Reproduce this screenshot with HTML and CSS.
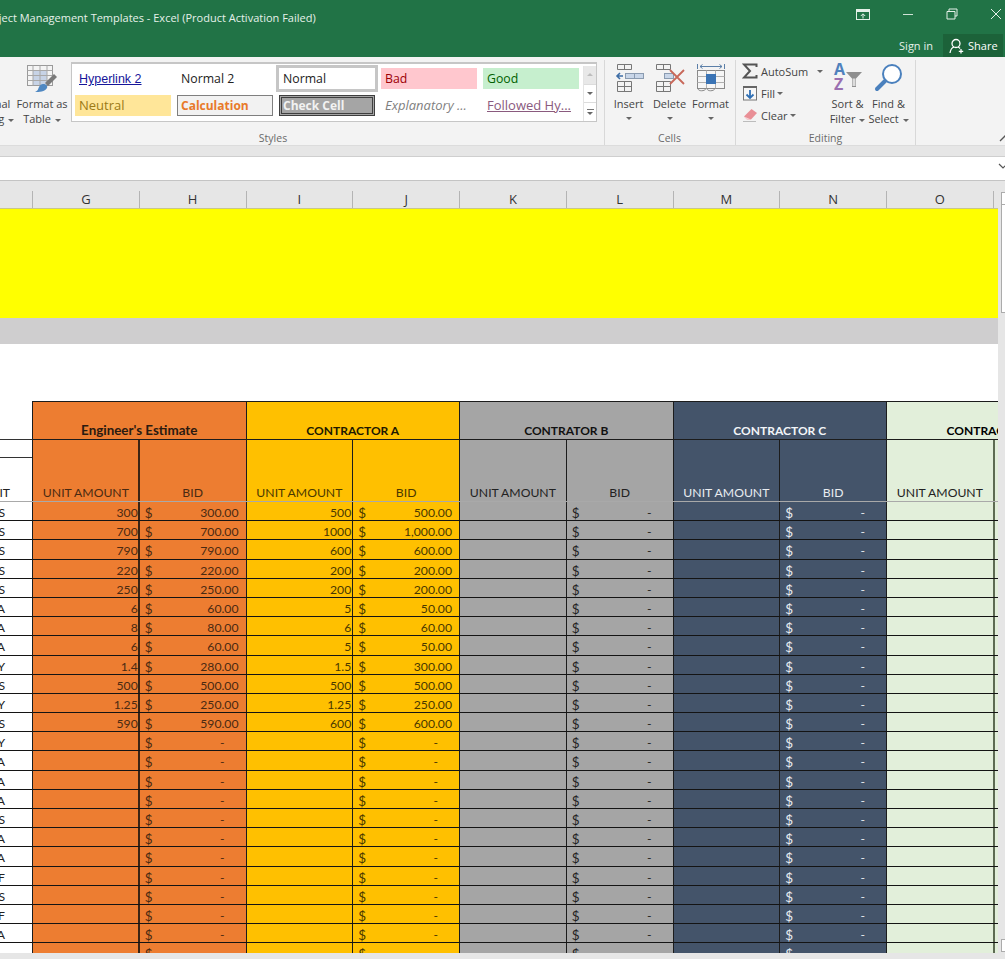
FILE: index.html
```html
<!DOCTYPE html>
<html lang="en">
<head>
<meta charset="utf-8">
<title>Project Management Templates - Excel</title>
<link rel="stylesheet" href="styles.css">
</head>
<body>
<div class="titlebar">
    <div class="title-row">
        <div class="title">Project Management Templates - Excel (Product Activation Failed)</div>
        <div class="win-btn"><svg width="14" height="11" viewBox="0 0 14 11"><rect x="0.5" y="0.5" width="13" height="10" fill="none" stroke="#e4f0e8"/><rect x="1" y="1" width="12" height="2" fill="#e4f0e8"/><path d="M7 9.500V5M4.800 7L7 4.800 9.200 7" fill="none" stroke="#e4f0e8"/></svg></div>
        <div class="win-btn"><svg width="12" height="12" viewBox="0 0 12 12"><path d="M1 6.500h10" stroke="#cfe3d6" stroke-width="1"/></svg></div>
        <div class="win-btn"><svg width="12" height="12" viewBox="0 0 12 12"><path d="M3 3V1h8v7H9M1 3.500h8v7.500H1z" fill="none" stroke="#e4f0e8"/></svg></div>
        <div class="win-btn"><svg width="12" height="12" viewBox="0 0 12 12"><path d="M1 1l10 10M11 1L1 11" stroke="#e4f0e8"/></svg></div>
    </div>
    <div class="account-row">
        <span class="sign-in">Sign in</span>
        <span class="share"><svg width="16" height="16" viewBox="0 0 16 16"><circle cx="7" cy="5.500" r="4" fill="none" stroke="#fff" stroke-width="1.300"/><path d="M1 15c.5-3.500 2.500-5.500 4-6M9 9c.8.300 1.500.8 2 1.500M12 11v4.500M9.800 13.300h4.400" fill="none" stroke="#fff" stroke-width="1.300"/></svg>Share</span>
    </div>
</div>

<div class="ribbon">
    <div class="group group-styles">
        <div class="group-body">
            <div class="big cond"><div class="big-icon"></div><div>Conditional</div><div>Formatting <span class="caret"></span></div></div>
            <div class="big fmt-table">
                <div class="big-icon"><svg width="32" height="30" viewBox="0 0 32 30"><rect x="1.500" y="2.500" width="25" height="20" fill="#f4f4f4" stroke="#9a9a9a"/><rect x="7" y="8" width="14" height="14" fill="#c7d3e6"/><path d="M1.500 7.500h25M1.500 12.500h25M1.500 17.500h25M7 2.500v20M14 2.500v20M21 2.500v20" stroke="#a8a8a8" fill="none"/><path d="M28 11l3 3-9 9-3-3z" fill="#7a7a7a"/><path d="M17 21c3 0 5 2 4 4-2 4-8 4-12 4 3-1 3-3 4-5 .800-1.800 2.500-3 4-3z" fill="#4f88c2"/></svg></div>
                <div>Format as</div><div>Table <span class="caret"></span></div>
            </div>
            <div class="gallery">
                <div class="swatches">
                    <div class="sw s-link">Hyperlink 2</div>
                    <div class="sw">Normal 2</div>
                    <div class="sw s-normal">Normal</div>
                    <div class="sw s-bad">Bad</div>
                    <div class="sw s-good">Good</div>
                    <div class="sw s-neutral">Neutral</div>
                    <div class="sw s-calc">Calculation</div>
                    <div class="sw s-check">Check Cell</div>
                    <div class="sw s-expl">Explanatory ...</div>
                    <div class="sw s-followed">Followed Hy...</div>
                </div>
                <div class="scroller">
                    <div class="scr scr-up"><span class="caret up"></span></div>
                    <div class="scr"><span class="caret"></span></div>
                    <div class="scr scr-more"><span class="more-line"></span><span class="caret"></span></div>
                </div>
            </div>
        </div>
        <div class="group-label">Styles</div>
    </div>

    <div class="group group-cells">
        <div class="group-body">
            <div class="big cell-btn">
                <div class="big-icon"><svg width="32" height="30" viewBox="0 0 32 30"><path d="M4.500 1.500h14v5h-14zM11.500 1.500v5M4.500 18.500h14v10h-14zM4.500 23.500h14M11.500 18.500v10" fill="none" stroke="#777"/><rect x="12.500" y="10.500" width="18" height="5" fill="#c9d6e8" stroke="#8a9bb0"/><path d="M21.500 10.500v5" stroke="#8a9bb0"/><path d="M10 13H4.500M7 10l-3 3 3 3" fill="none" stroke="#3e6ea6" stroke-width="1.600"/></svg></div>
                <div>Insert</div><div class="caret-line"><span class="caret"></span></div>
            </div>
            <div class="big cell-btn">
                <div class="big-icon"><svg width="32" height="30" viewBox="0 0 32 30"><path d="M2.500 1.500h14v5h-14zM9.500 1.500v5M2.500 18.500h14v10h-14zM2.500 23.500h14M9.500 18.500v10" fill="none" stroke="#777"/><rect x="10.500" y="10.500" width="9" height="5" fill="#c9d6e8" stroke="#8a9bb0"/><path d="M16 7l14 14M30 7L16 21" stroke="#c8685a" stroke-width="1.800"/></svg></div>
                <div>Delete</div><div class="caret-line"><span class="caret"></span></div>
            </div>
            <div class="big cell-btn">
                <div class="big-icon"><svg width="32" height="30" viewBox="0 0 32 30"><path d="M2.500 1v5M29.500 1v5M5 3.500h22M5 3.500l2.500-2M5 3.500l2.500 2M27 3.500l-2.500-2M27 3.500l-2.500 2" fill="none" stroke="#5b7fa8"/><rect x="2.500" y="7.500" width="27" height="18" fill="#f6f6f6" stroke="#8a8a8a"/><path d="M2.500 13.500h27M2.500 19.500h27M11.500 7.500v18M20.500 7.500v18" stroke="#b0b0b0"/><rect x="11" y="11" width="10" height="10" fill="#3b74b5"/><path d="M3 25.500c0 3 7 3 8 0M12 25.500c0 3 7 3 8 0" fill="none" stroke="#8a8a8a"/></svg></div>
                <div>Format</div><div class="caret-line"><span class="caret"></span></div>
            </div>
        </div>
        <div class="group-label">Cells</div>
    </div>

    <div class="group group-editing">
        <div class="group-body">
            <div class="small-col">
                <div class="small"><svg width="16" height="16" viewBox="0 0 16 16"><path d="M14.500 4V1.500H2l6 6.500-6 6.500h12.500V12" fill="none" stroke="#555" stroke-width="2"/></svg><span>AutoSum</span><span class="caret far"></span></div>
                <div class="small"><svg width="16" height="16" viewBox="0 0 16 16"><rect x="1.500" y="1.500" width="13" height="13.500" fill="#f7f7f7" stroke="#777"/><rect x="1" y="1" width="14" height="2" fill="#666"/><path d="M8 5v8M4.500 9.500L8 13l3.500-3.500" fill="none" stroke="#2f6fb4" stroke-width="1.800"/></svg><span>Fill</span><span class="caret"></span></div>
                <div class="small"><svg width="16" height="16" viewBox="0 0 16 16"><path d="M9.500 2L15 6l-6 6.500H5L2 9.500z" fill="#e98f96"/><path d="M2 9.500l3 3h4" fill="#f6d4d6"/><path d="M1 14.500h13" stroke="#bcbcbc"/></svg><span>Clear</span><span class="caret"></span></div>
            </div>
            <div class="big edit-btn">
                <div class="big-icon"><svg width="32" height="30" viewBox="0 0 32 30"><text x="2" y="12" class="az az-a">A</text><text x="2" y="27" class="az az-z">Z</text><path d="M14 9h16l-6 6.500V24h-4v-8.500z" fill="#8f8f8f"/><path d="M20.500 15.500h3V23h-3z" fill="#dcdcdc"/></svg></div>
                <div>Sort &amp;</div><div>Filter <span class="caret"></span></div>
            </div>
            <div class="big edit-btn">
                <div class="big-icon"><svg width="30" height="30" viewBox="0 0 30 30"><circle cx="18" cy="11" r="9" fill="#fff" stroke="#4a80bd" stroke-width="2"/><path d="M11 18L3 26" stroke="#4a80bd" stroke-width="4" stroke-linecap="round"/></svg></div>
                <div>Find &amp;</div><div>Select <span class="caret"></span></div>
            </div>
        </div>
        <div class="group-label">Editing</div>
    </div>

    <div class="collapse"><svg width="12" height="8" viewBox="0 0 12 8"><path d="M1 7l5-5 5 5" fill="none" stroke="#555" stroke-width="1.300"/></svg></div>
</div>

<div class="band"></div>
<div class="formula"><svg width="10" height="7" viewBox="0 0 10 7"><path d="M1 1l4 4 4-4" fill="none" stroke="#555" stroke-width="1.200"/></svg></div>

<div class="main">
    <div class="sheet">
        <div class="cols">
            <span></span><span>G</span><span>H</span><span>I</span><span>J</span><span>K</span><span>L</span><span>M</span><span>N</span><span>O</span><span></span>
        </div>
        <div class="grid-area">
            <div class="banner"></div>
            <div class="strip"></div>
            <div class="gap"></div>

            <div class="head-top">
                <span class="blank"></span>
                <span class="h2 orange est">Engineer's Estimate</span>
                <span class="h2 gold">CONTRACTOR A</span>
                <span class="h2 grey">CONTRATOR B</span>
                <span class="h2 navy">CONTRACTOR C</span>
                <span class="h2 green cut">CONTRACTOR D</span>
            </div>
            <div class="head-sub">
                <span class="unit-head"><i></i><b>UNIT</b></span>
                <span>UNIT AMOUNT</span><span>BID</span>
                <span>UNIT AMOUNT</span><span>BID</span>
                <span>UNIT AMOUNT</span><span>BID</span>
                <span>UNIT AMOUNT</span><span>BID</span>
                <span>UNIT AMOUNT</span><span></span>
            </div>

            <div class="row"><span>LS</span><span>300</span><span><i>$</i>300.00</span><span>500</span><span><i>$</i>500.00</span><span></span><span class="nil"><i>$</i>-</span><span></span><span class="nil"><i>$</i>-</span><span></span><span></span></div>
            <div class="row"><span>LS</span><span>700</span><span><i>$</i>700.00</span><span>1000</span><span><i>$</i>1,000.00</span><span></span><span class="nil"><i>$</i>-</span><span></span><span class="nil"><i>$</i>-</span><span></span><span></span></div>
            <div class="row"><span>LS</span><span>790</span><span><i>$</i>790.00</span><span>600</span><span><i>$</i>600.00</span><span></span><span class="nil"><i>$</i>-</span><span></span><span class="nil"><i>$</i>-</span><span></span><span></span></div>
            <div class="row"><span>LS</span><span>220</span><span><i>$</i>220.00</span><span>200</span><span><i>$</i>200.00</span><span></span><span class="nil"><i>$</i>-</span><span></span><span class="nil"><i>$</i>-</span><span></span><span></span></div>
            <div class="row"><span>LS</span><span>250</span><span><i>$</i>250.00</span><span>200</span><span><i>$</i>200.00</span><span></span><span class="nil"><i>$</i>-</span><span></span><span class="nil"><i>$</i>-</span><span></span><span></span></div>
            <div class="row"><span>EA</span><span>6</span><span><i>$</i>60.00</span><span>5</span><span><i>$</i>50.00</span><span></span><span class="nil"><i>$</i>-</span><span></span><span class="nil"><i>$</i>-</span><span></span><span></span></div>
            <div class="row"><span>EA</span><span>8</span><span><i>$</i>80.00</span><span>6</span><span><i>$</i>60.00</span><span></span><span class="nil"><i>$</i>-</span><span></span><span class="nil"><i>$</i>-</span><span></span><span></span></div>
            <div class="row"><span>EA</span><span>6</span><span><i>$</i>60.00</span><span>5</span><span><i>$</i>50.00</span><span></span><span class="nil"><i>$</i>-</span><span></span><span class="nil"><i>$</i>-</span><span></span><span></span></div>
            <div class="row"><span>CY</span><span>1.4</span><span><i>$</i>280.00</span><span>1.5</span><span><i>$</i>300.00</span><span></span><span class="nil"><i>$</i>-</span><span></span><span class="nil"><i>$</i>-</span><span></span><span></span></div>
            <div class="row"><span>LS</span><span>500</span><span><i>$</i>500.00</span><span>500</span><span><i>$</i>500.00</span><span></span><span class="nil"><i>$</i>-</span><span></span><span class="nil"><i>$</i>-</span><span></span><span></span></div>
            <div class="row"><span>CY</span><span>1.25</span><span><i>$</i>250.00</span><span>1.25</span><span><i>$</i>250.00</span><span></span><span class="nil"><i>$</i>-</span><span></span><span class="nil"><i>$</i>-</span><span></span><span></span></div>
            <div class="row"><span>LS</span><span>590</span><span><i>$</i>590.00</span><span>600</span><span><i>$</i>600.00</span><span></span><span class="nil"><i>$</i>-</span><span></span><span class="nil"><i>$</i>-</span><span></span><span></span></div>
            <div class="row"><span>CY</span><span></span><span class="nil"><i>$</i>-</span><span></span><span class="nil"><i>$</i>-</span><span></span><span class="nil"><i>$</i>-</span><span></span><span class="nil"><i>$</i>-</span><span></span><span></span></div>
            <div class="row"><span>EA</span><span></span><span class="nil"><i>$</i>-</span><span></span><span class="nil"><i>$</i>-</span><span></span><span class="nil"><i>$</i>-</span><span></span><span class="nil"><i>$</i>-</span><span></span><span></span></div>
            <div class="row"><span>EA</span><span></span><span class="nil"><i>$</i>-</span><span></span><span class="nil"><i>$</i>-</span><span></span><span class="nil"><i>$</i>-</span><span></span><span class="nil"><i>$</i>-</span><span></span><span></span></div>
            <div class="row"><span>EA</span><span></span><span class="nil"><i>$</i>-</span><span></span><span class="nil"><i>$</i>-</span><span></span><span class="nil"><i>$</i>-</span><span></span><span class="nil"><i>$</i>-</span><span></span><span></span></div>
            <div class="row"><span>LS</span><span></span><span class="nil"><i>$</i>-</span><span></span><span class="nil"><i>$</i>-</span><span></span><span class="nil"><i>$</i>-</span><span></span><span class="nil"><i>$</i>-</span><span></span><span></span></div>
            <div class="row"><span>EA</span><span></span><span class="nil"><i>$</i>-</span><span></span><span class="nil"><i>$</i>-</span><span></span><span class="nil"><i>$</i>-</span><span></span><span class="nil"><i>$</i>-</span><span></span><span></span></div>
            <div class="row"><span>EA</span><span></span><span class="nil"><i>$</i>-</span><span></span><span class="nil"><i>$</i>-</span><span></span><span class="nil"><i>$</i>-</span><span></span><span class="nil"><i>$</i>-</span><span></span><span></span></div>
            <div class="row"><span>SF</span><span></span><span class="nil"><i>$</i>-</span><span></span><span class="nil"><i>$</i>-</span><span></span><span class="nil"><i>$</i>-</span><span></span><span class="nil"><i>$</i>-</span><span></span><span></span></div>
            <div class="row"><span>LS</span><span></span><span class="nil"><i>$</i>-</span><span></span><span class="nil"><i>$</i>-</span><span></span><span class="nil"><i>$</i>-</span><span></span><span class="nil"><i>$</i>-</span><span></span><span></span></div>
            <div class="row"><span>SF</span><span></span><span class="nil"><i>$</i>-</span><span></span><span class="nil"><i>$</i>-</span><span></span><span class="nil"><i>$</i>-</span><span></span><span class="nil"><i>$</i>-</span><span></span><span></span></div>
            <div class="row"><span>EA</span><span></span><span class="nil"><i>$</i>-</span><span></span><span class="nil"><i>$</i>-</span><span></span><span class="nil"><i>$</i>-</span><span></span><span class="nil"><i>$</i>-</span><span></span><span></span></div>
            <div class="row"><span></span><span></span><span class="nil"><i>$</i>-</span><span></span><span class="nil"><i>$</i>-</span><span></span><span class="nil"><i>$</i>-</span><span></span><span class="nil"><i>$</i>-</span><span></span><span></span></div>
        </div>
        <div class="sheet-foot"></div>
    </div>
    <div class="vscroll">
        <div class="v-btn"></div>
        <div class="v-thumb"></div>
        <div class="v-btn v-down"></div>
    </div>
</div>
</body>
</html>
```

FILE: styles.css
```css
* { margin: 0; padding: 0; box-sizing: border-box; }
html, body { height: 100%; }
body { display: flex; flex-direction: column; overflow: hidden; font: 11px/15px 'Open Sans', sans-serif; color: #444; background: #e6e6e6; }

/* title bar */
.titlebar { flex: none; height: 57px; background: #217346; color: #e6f1ea; }
.title-row { display: flex; height: 34px; align-items: center; }
.title { flex: 1; margin-left: -19px; white-space: nowrap; }
.win-btn { flex: none; width: 44px; height: 28px; align-self: flex-start; display: flex; justify-content: center; align-items: center; }
.win-btn:last-child { margin-right: -13px; }
.win-btn:nth-child(2) { margin-right: 1px; }
.account-row { display: flex; justify-content: flex-end; align-items: stretch; height: 23px; padding-right: 2px; }
.sign-in { align-self: center; margin-right: 10px; }
.share { display: flex; align-items: center; gap: 3px; width: 60px; padding-left: 6px; background: #1c6239; color: #fff; }

/* ribbon */
.ribbon { flex: none; display: flex; height: 89px; padding-top: 3px; background: #f3f3f3; border-bottom: 1px solid #dcdcdc; }
.group { flex: none; display: flex; flex-direction: column; border-right: 1px solid #d8d8d8; }
.group-body { display: flex; height: 71px; }
.group-label { height: 14px; line-height: 14px; text-align: center; color: #6a6a6a; font-size: 10.500px; }
.group-styles { width: 665px; margin-left: -60px; }
.group-styles .group-label { padding-left: 2px; }
.group-cells { width: 131px; padding-left: 3px; }
.group-cells .group-label { padding-right: 4px; }
.group-editing { width: 180px; padding-left: 6px; }
.group-editing .group-label { padding-right: 6px; }

.big { flex: none; display: flex; flex-direction: column; align-items: center; white-space: nowrap; }
.big-icon { height: 36px; padding-top: 3px; }
.cond { width: 75px; padding-left: 7px; }
.fmt-table { width: 54px; }
.cell-btn { width: 41px; }
.edit-btn { width: 41px; }
.caret-line { height: 15px; display: flex; align-items: center; }
.caret { display: inline-block; width: 0; height: 0; margin-left: 1px; vertical-align: middle; border: 3px solid transparent; border-top-color: #666; border-bottom-width: 0; }
.caret.up { border-top-width: 0; border-bottom: 3px solid #bdbdbd; }

.gallery { flex: none; display: flex; width: 526px; height: 60px; margin: 2px 0 0 2px; background: #fff; border: 1px solid #c6c6c6; border-width: 2px 1px 1px 1px; }
.swatches { flex: 1; display: grid; grid-template-columns: repeat(5, 96px); grid-template-rows: 21px 21px; column-gap: 6px; row-gap: 6px; padding: 4px 0 0 3px; }
.sw { padding-left: 4px; line-height: 22px; font-size: 12.300px; color: #222; white-space: nowrap; overflow: hidden; }
.s-link { color: #16169a; text-decoration: underline; font-family: 'Liberation Sans', sans-serif; font-size: 12.500px; }
.s-normal { outline: 3px solid #c6c6c6; outline-offset: 0; }
.s-bad { background: #ffc7ce; color: #9c0006; }
.s-good { background: #c6efce; color: #006100; }
.s-neutral { background: #ffe699; color: #9c7a16; font-size: 13px; line-height: 20px; }
.s-calc { background: #f2f2f2; border: 1px solid #7f7f7f; color: #e8792a; font-weight: 700; font-size: 12px; line-height: 19px; padding-left: 3px; }
.s-check { background: #a5a5a5; border: 3px double #3f3f3f; color: #f2f2f2; font-weight: 700; font-size: 12px; line-height: 15px; padding-left: 1px; }
.s-expl { color: #7f7f7f; font-style: italic; font-size: 13px; line-height: 20px; }
.s-followed { color: #8a5a7e; text-decoration: underline; font-size: 13px; line-height: 20px; }
.scroller { flex: none; width: 13px; display: flex; flex-direction: column; margin: 2px 0 0 0; border-left: 1px solid #e4e4e4; }
.scr { flex: 1; display: flex; flex-direction: column; align-items: center; justify-content: center; gap: 2px; border-bottom: 1px solid #dcdcdc; }
.scr:last-child { border-bottom: 0; }
.scr-up { background: #e8e8e8; }
.scr .caret { margin: 0; }
.more-line { width: 7px; height: 1px; background: #777; }

.small-col { flex: none; width: 85px; }
.small { display: flex; align-items: center; gap: 3px; height: 22px; white-space: nowrap; }
.small .caret { margin-left: -1px; }
.small .far { margin-left: 6px; }
.az { font: 700 16px 'Open Sans', sans-serif; }
.az-a { fill: #4f81bd; }
.az-z { fill: #9a6fb0; }
.collapse { flex: 1; display: flex; justify-content: flex-end; align-items: flex-end; padding-bottom: 3px; margin-right: -6px; }

.band { flex: none; height: 11px; background: #e6e6e6; border-bottom: 1px solid #cfcfcf; }
.formula { flex: none; height: 24px; display: flex; justify-content: flex-end; align-items: flex-start; padding-top: 6px; background: #fff; border-bottom: 1px solid #c4c4c4; }
.formula svg { margin-right: -3px; }

/* sheet */
.main { flex: 1; display: flex; min-height: 0; }
.sheet { flex: none; width: 998px; display: flex; flex-direction: column; overflow: hidden; --cols: 32px repeat(9, 106.750px) 1fr; }
.cols { flex: none; height: 28px; display: grid; grid-template-columns: var(--cols); background: #e6e6e6; border-bottom: 1px solid #c9c78a; font: 13px/17px 'Open Sans', sans-serif; color: #333; text-align: center; }
.cols span { margin-top: 10px; }
.cols span + span { border-left: 1px solid #b4b4b4; }
.grid-area { flex: 1; min-height: 0; overflow: hidden; background: #fff; font: 12.200px/19px 'Lato', sans-serif; }
.sheet-foot { flex: none; height: 6px; background: #e6e6e6; }
.banner { height: 109px; background: #ffff00; }
.strip { height: 26px; background: #cfcecf; }
.gap { height: 57px; }

.head-top, .head-sub, .row { display: grid; grid-template-columns: var(--cols); }
.head-top { height: 39px; line-height: 17px; }
.head-top span { display: flex; align-items: flex-end; justify-content: center; border-bottom: 1px solid #1c1c1c; white-space: nowrap; overflow: hidden; }
.head-top .blank { background: #fff; border-bottom: 1px solid #333; }
.h2 { grid-column: span 2; font-weight: 700; font-size: 12px; border-top: 1px solid #1c1c1c; border-left: 1px solid #1c1c1c; color: #2a1a10; }
.head-top .est { font-size: 13.400px; }
.head-top .cut { width: 214px; overflow: visible; color: #000; }
.orange { background: #ed7d31; }
.gold { background: #ffc000; color: #201800; }
.grey { background: #a5a5a5; color: #111; }
.navy { background: #44546a; color: #f2f5f8; }
.green { background: #e2efda; }

.head-sub { height: 62px; line-height: 17px; border-bottom: 1px solid #a9a9a9; }
.head-sub span { display: flex; align-items: flex-end; justify-content: center; border-left: 1px solid #1c1c1c; }
.head-sub span:nth-child(2), .head-sub span:nth-child(3) { background: #ed7d31; color: #4a2a12; }
.head-sub span:nth-child(4), .head-sub span:nth-child(5) { background: #ffc000; color: #4a3800; }
.head-sub span:nth-child(6), .head-sub span:nth-child(7) { background: #a5a5a5; color: #222; }
.head-sub span:nth-child(8), .head-sub span:nth-child(9) { background: #44546a; color: #e8ecf0; }
.head-sub span:nth-child(10), .head-sub span:nth-child(11) { background: #e2efda; color: #222; }
.head-sub span:nth-child(3) { border-left: 2px solid #3a2414; margin-left: -1px; }
.head-sub .unit-head { flex-direction: column; align-items: stretch; justify-content: flex-start; border-left: 0; overflow: hidden; }
.unit-head i { height: 18px; border-bottom: 1px solid #333; }
.unit-head b { flex: 1; display: flex; align-items: flex-end; justify-content: flex-end; padding-right: 22px; font-weight: 400; color: #222; }

.row { height: 19.200px; border-bottom: 1px solid #141414; }
.row span { display: flex; justify-content: flex-end; padding-right: 1px; white-space: nowrap; overflow: hidden; line-height: 22px; border-left: 1px solid #1c1c1c; }
.row span i { margin-right: auto; padding-left: 5px; font-style: normal; font-size: 13.500px; }
.row span:has(i) { padding-right: 7px; }
.row span.nil { padding-right: 21px; }
.row span:nth-child(1) { border-left: 0; padding-right: 27px; color: #222; }
.row span:nth-child(2), .row span:nth-child(3) { background: #ed7d31; color: #4a2a12; }
.row span:nth-child(3) { border-left: 2px solid #3a2414; margin-left: -1px; }
.row span:nth-child(4), .row span:nth-child(5) { background: #ffc000; color: #4a3800; }
.row span:nth-child(6), .row span:nth-child(7) { background: #a5a5a5; color: #222; }
.row span:nth-child(8), .row span:nth-child(9) { background: #44546a; color: #e8ecf0; }
.row span:nth-child(10), .row span:nth-child(11) { background: #e2efda; }
.row span:nth-child(11), .head-sub span:nth-child(11) { border-left: 2px solid #5d6b52; }

.vscroll { flex: none; width: 7px; display: flex; flex-direction: column; padding: 11px 0 7px 3px; background: #e6e6e6; }
.v-btn { height: 13px; background: #fff; border: 1px solid #ababab; border-right: 0; }
.v-thumb { height: 108px; background: #fff; border: 1px solid #ababab; border-width: 0 0 1px 1px; }
.v-down { margin-top: auto; }
```
